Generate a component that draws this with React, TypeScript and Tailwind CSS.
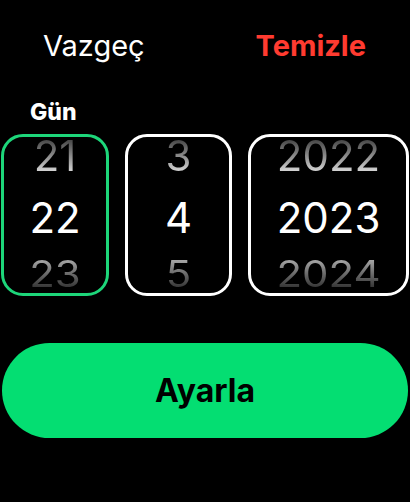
import React from "react";

const font = { fontFamily: "Inter, 'Noto Sans', sans-serif" };

type Column = { prev: string; cur: string; next: string; active?: boolean; width: string };

const columns: Column[] = [
  { prev: "21", cur: "22", next: "23", active: true, width: "w-[108px]" },
  { prev: "3", cur: "4", next: "5", width: "w-[107px]" },
  { prev: "2022", cur: "2023", next: "2024", width: "w-[161px]" },
];

function Wheel({ col }: { col: Column }) {
  return (
    <div
      className={`${col.width} flex h-[162px] shrink-0 flex-col items-center overflow-hidden rounded-[22px] border-[3px] text-[42px] ${
        col.active ? "border-[#1dd67a]" : "border-white"
      }`}
    >
      <span className="block h-[38px] bg-gradient-to-b from-[#3c3c3c] to-[#e6e6e6] bg-clip-text leading-[38px] text-transparent">
        {col.prev}
      </span>
      <span className="mt-[19px] block h-[48px] leading-[48px] text-white">{col.cur}</span>
      <span className="mt-[6px] block h-[48px] origin-[50%_39px] scale-y-[0.86] bg-gradient-to-b from-[#c4c4c4] to-[#1c1c1c] bg-clip-text leading-[48px] text-transparent">
        {col.next}
      </span>
    </div>
  );
}

export default function App() {
  return (
    <div className="h-[502px] w-[410px] overflow-hidden bg-black" style={font}>
      <div className="flex justify-between pl-[43px] pr-[44px] pt-[26px]">
        <span className="text-[29px] leading-[40px] text-white">Vazgeç</span>
        <span className="text-[29px] font-bold leading-[40px] text-[#ff3b30]">Temizle</span>
      </div>

      <div className="mt-[33px] pl-[30px] text-[23px] font-extrabold leading-[26px] text-white">Gün</div>

      <div className="mt-[9px] flex gap-4 pl-[1px]">
        {columns.map((c) => (
          <Wheel key={c.cur} col={c} />
        ))}
      </div>

      <button
        type="button"
        className="mx-[2px] mt-[47px] flex h-[95px] w-[406px] items-center justify-center rounded-full bg-[#04de72] text-[32px] font-bold text-black"
      >
        Ayarla
      </button>
    </div>
  );
}
